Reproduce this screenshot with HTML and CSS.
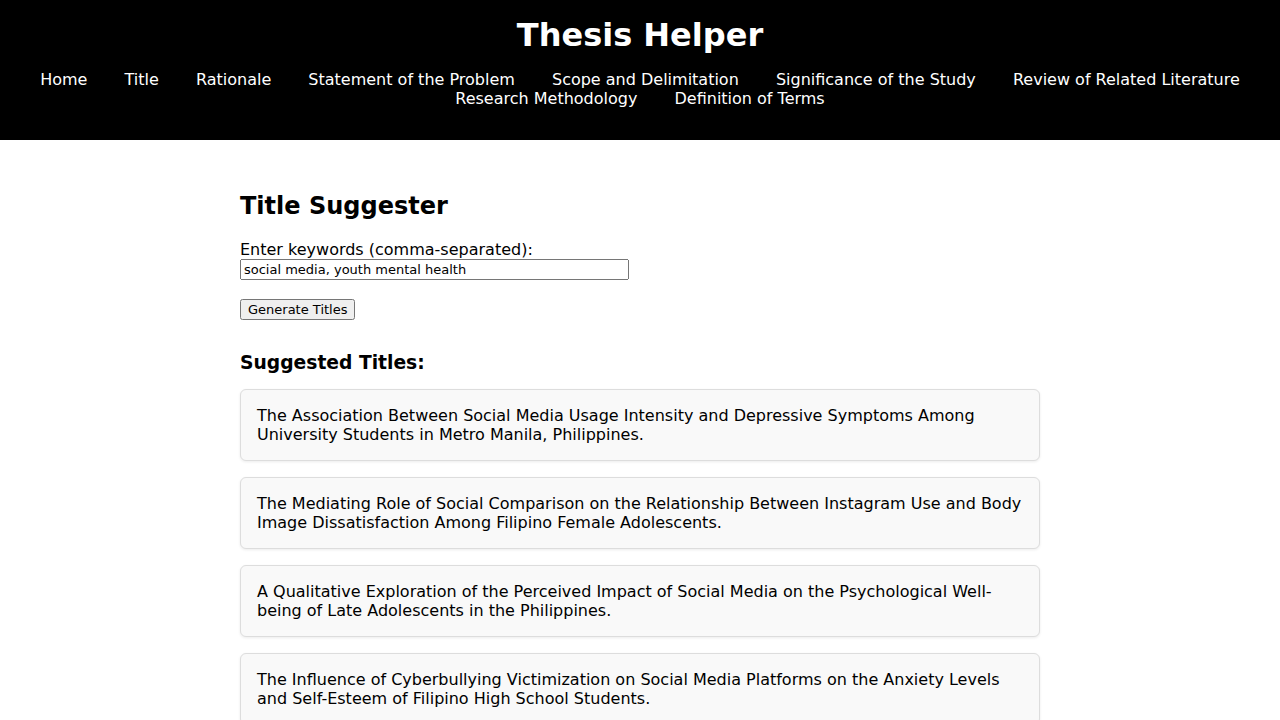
FILE: index.html
```html
<!DOCTYPE html>
<html lang="en">
<head>
<meta charset="utf-8">
<title>Thesis Helper</title>
<link rel="stylesheet" href="styles.css">
</head>
<body>
<header class="site-header">
  <h1 class="site-title">Thesis Helper</h1>
  <nav class="site-nav">
    <a href="#">Home</a>
    <a href="#">Title</a>
    <a href="#">Rationale</a>
    <a href="#">Statement of the Problem</a>
    <a href="#">Scope and Delimitation</a>
    <a href="#">Significance of the Study</a>
    <a href="#">Review of Related Literature</a>
    <a href="#">Research Methodology</a>
    <a href="#">Definition of Terms</a>
  </nav>
</header>
<main class="content">
  <h2 class="section-title">Title Suggester</h2>
  <label class="field-label" for="keywords">Enter keywords (comma-separated):</label>
  <input class="keywords-input" id="keywords" type="text" value="social media, youth mental health">
  <button class="generate-btn" type="button">Generate Titles</button>
  <h3 class="results-title">Suggested Titles:</h3>
  <div class="results">
    <div class="title-card">The Association Between Social Media Usage Intensity and Depressive Symptoms Among University Students in Metro Manila, Philippines.</div>
    <div class="title-card">The Mediating Role of Social Comparison on the Relationship Between Instagram Use and Body Image Dissatisfaction Among Filipino Female Adolescents.</div>
    <div class="title-card">A Qualitative Exploration of the Perceived Impact of Social Media on the Psychological Well-being of Late Adolescents in the Philippines.</div>
    <div class="title-card">The Influence of Cyberbullying Victimization on Social Media Platforms on the Anxiety Levels and Self-Esteem of Filipino High School Students.</div>
  </div>
</main>
</body>
</html>
```
FILE: styles.css
```css
html, body {
  margin: 0;
  padding: 0;
}
body {
  font-family: "DejaVu Sans", sans-serif;
  font-size: 16px;
  color: #000;
  background: #fff;
}
.site-header {
  background: #000;
  color: #fff;
  text-align: center;
  padding: 16px 0 32px;
}
.site-title {
  font-size: 32px;
  font-weight: bold;
  margin: 0 0 16px;
}
.site-nav {
  text-align: center;
}
.site-nav a {
  color: #fff;
  text-decoration: none;
  margin: 0 16px;
}
.content {
  width: 800px;
  margin: 0 auto;
  padding-top: 52px;
  display: flex;
  flex-direction: column;
  align-items: flex-start;
}
.section-title {
  font-size: 24px;
  margin: 0 0 20px;
}
.field-label {
  display: block;
}
.keywords-input {
  box-sizing: border-box;
  width: 389px;
  height: 21px;
  font-family: "DejaVu Sans", sans-serif;
  font-size: 13px;
  margin: 0 0 19px;
}
.generate-btn {
  box-sizing: border-box;
  height: 21px;
  font-family: "DejaVu Sans", sans-serif;
  font-size: 13px;
  margin: 0 0 32px;
}
.results-title {
  font-size: 18.72px;
  margin: 0 0 16px;
}
.results {
  align-self: stretch;
}
.title-card {
  background: #f9f9f9;
  border: 1px solid #ddd;
  border-radius: 6px;
  padding: 16px;
  margin-bottom: 16px;
  box-shadow: 0 1px 3px rgba(0, 0, 0, 0.08);
}
```
